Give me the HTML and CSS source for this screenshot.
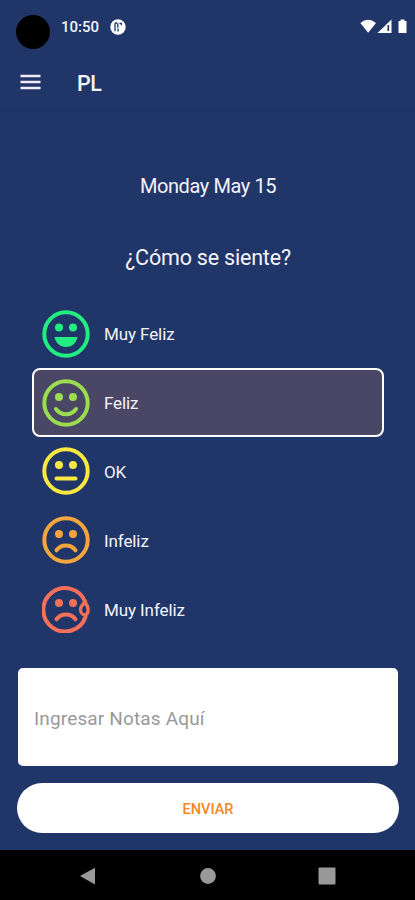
FILE: index.html
```html
<!DOCTYPE html>
<html lang="es">
<head>
<meta charset="utf-8">
<title>PL</title>
<link rel="stylesheet" href="styles.css">
</head>
<body>
<div class="status">
  <span class="camera"></span>
  <span class="clock">10:50</span>
  <svg class="app-mark" viewBox="0 0 16 16"><circle cx="8" cy="8" r="7.700" fill="#fff"/><path d="M5 4.200v8M7.800 4.200v4.500M5 4h2.200M9.500 4.300h1.800v2M8 9.500v3" fill="none" stroke="#203568" stroke-width="1.300"/></svg>
  <svg class="signals" viewBox="0 0 48 16"><path d="M.3 4Q8-2.300 16 4L8.200 13.800z" fill="#fff"/><path d="M31.500.5V14H17.500z" fill="#fff"/><path d="M28.300 6v6" stroke="#203568" stroke-width="1.700"/><path d="M38.500 2h2V.4h4V2h2v12h-8z" fill="#fff"/></svg>
</div>
<header class="appbar">
  <svg class="menu" viewBox="0 0 20 16"><path d="M0 2h20M0 8h20M0 14h20" stroke="#f1ecfa" stroke-width="2.300"/></svg>
  <h1 class="title">PL</h1>
</header>
<main class="content">
  <p class="date">Monday May 15</p>
  <h2 class="question">¿Cómo se siente?</h2>
  <ul class="moods">
    <li class="mood great">
      <svg class="face" viewBox="0 0 48 48"><circle class="line" cx="24" cy="24" r="21.700"/><circle class="dot" cx="17" cy="17.500" r="4"/><circle class="dot" cx="31" cy="17.500" r="4"/><path class="dot" d="M12.500 27h23c-1 6-5.700 10-11.500 10s-10.500-4-11.500-10z"/></svg>
      <span>Muy Feliz</span>
    </li>
    <li class="mood good selected">
      <svg class="face" viewBox="0 0 48 48"><circle class="line" cx="24" cy="24" r="21.700"/><circle class="dot" cx="17" cy="18" r="4"/><circle class="dot" cx="31" cy="18" r="4"/><path class="line" d="M14 30c5 7 15 7 20 0"/></svg>
      <span>Feliz</span>
    </li>
    <li class="mood okay">
      <svg class="face" viewBox="0 0 48 48"><circle class="line" cx="24" cy="24" r="21.700"/><circle class="dot" cx="17" cy="18" r="4"/><circle class="dot" cx="31" cy="18" r="4"/><path class="line" d="M14.500 31.500h19"/></svg>
      <span>OK</span>
    </li>
    <li class="mood sad">
      <svg class="face" viewBox="0 0 48 48"><circle class="line" cx="24" cy="24" r="21.700"/><circle class="dot" cx="17" cy="18" r="4"/><circle class="dot" cx="31" cy="18" r="4"/><path class="line" d="M14.500 34.300c5-6.300 14-6.300 19 0"/></svg>
      <span>Infeliz</span>
    </li>
    <li class="mood awful">
      <svg class="face" viewBox="0 0 48 48"><path class="line" d="M43.300 17A21.700 21.700 0 1 0 43.500 32"/><circle class="dot" cx="17" cy="18" r="4"/><circle class="dot" cx="31" cy="18" r="4"/><path class="line" d="M14.500 34.300c5-6.300 14-6.300 19 0"/><path class="line tear" d="M42.500 17.500c-2 2-4 4.400-4 7s1.700 5.300 4.100 5.300 3.500-2.300 3.500-5.300c0-2.700-1.100-5-3.600-7z"/></svg>
      <span>Muy Infeliz</span>
    </li>
  </ul>
  <div class="notes">Ingresar Notas Aquí</div>
  <button class="send" type="button">ENVIAR</button>
</main>
<nav class="navbar">
  <svg viewBox="0 0 18 18"><path d="M1 9 16 .8v16.700z"/></svg>
  <svg viewBox="0 0 18 18"><circle cx="9" cy="9" r="7.900"/></svg>
  <svg viewBox="0 0 18 18"><rect x=".5" y=".5" width="17" height="17" rx="1"/></svg>
</nav>
</body>
</html>
```
FILE: styles.css
```css
* { box-sizing: border-box; }
body {
  margin: 0;
  height: 900px;
  display: flex;
  flex-direction: column;
  overflow: hidden;
  background: #203568;
  color: #f4f3fa;
  font-family: Roboto, "Liberation Sans", sans-serif;
}
svg { display: block; flex: none; }
.status {
  height: 54px;
  display: flex;
  align-items: center;
  padding: 0 7px 0 16px;
}
.camera {
  width: 34px;
  height: 34px;
  margin-top: 10px;
  border-radius: 50%;
  background: #000;
}
.clock {
  margin-left: 11px;
  width: 49px;
  font-size: 15px;
  font-weight: 500;
}
.app-mark { width: 16px; height: 16px; }
.signals { width: 48px; height: 16px; margin-left: auto; }
.appbar {
  height: 57px;
  display: flex;
  align-items: center;
  padding-left: 20px;
  border-bottom: 1px solid #1e3163;
}
.menu { width: 21px; height: 16px; }
.title {
  margin: 3px 0 0 36px;
  font-size: 21.500px;
  line-height: 26px;
  font-weight: 500;
  letter-spacing: -.4px;
}
.content {
  flex: 1;
  display: flex;
  flex-direction: column;
  padding: 62px 16px 17px 17px;
}
.date {
  margin: 0;
  text-align: center;
  font-size: 20px;
  line-height: 26px;
  letter-spacing: -.4px;
}
.question {
  margin: 44px 0 0;
  text-align: center;
  font-size: 21.500px;
  line-height: 30px;
  font-weight: 400;
  letter-spacing: -.2px;
}
.moods {
  list-style: none;
  margin: 26.500px 15px 0;
  padding: 0;
}
.mood {
  height: 68.800px;
  display: flex;
  align-items: center;
  gap: 14px;
  padding-left: 8px;
  border: 2px solid transparent;
  font-size: 17px;
  letter-spacing: -.1px;
}
.mood span { margin-top: 1px; }
.selected {
  background: #4a4766;
  border-color: #fff;
  border-radius: 8px;
}
.face { width: 48px; height: 48px; }
.line { fill: none; stroke: currentColor; stroke-width: 4; stroke-linecap: round; }
.tear { stroke-width: 3.300; }
.dot { fill: currentColor; }
.great .face { color: #22ed80; }
.good .face { color: #9bdc50; }
.okay .face { color: #f8e841; }
.sad .face { color: #f4a63e; }
.awful .face { color: #f47058; }
.notes {
  height: 98px;
  margin: 25px 1px 0;
  padding: 2px 16px 0;
  display: flex;
  align-items: center;
  border-radius: 5px;
  background: #fff;
  color: #999;
  font-size: 19px;
  letter-spacing: .15px;
}
.send {
  height: 50px;
  margin-top: auto;
  padding-top: 3px;
  border: 0;
  border-radius: 25px;
  background: #fff;
  color: #f5871f;
  font: 500 14.500px Roboto, "Liberation Sans", sans-serif;
}
.navbar {
  height: 50px;
  display: flex;
  align-items: center;
  justify-content: space-between;
  padding: 1px 79px 0 79px;
  background: #000;
}
.navbar svg { width: 18px; height: 18px; fill: #999; }
```
